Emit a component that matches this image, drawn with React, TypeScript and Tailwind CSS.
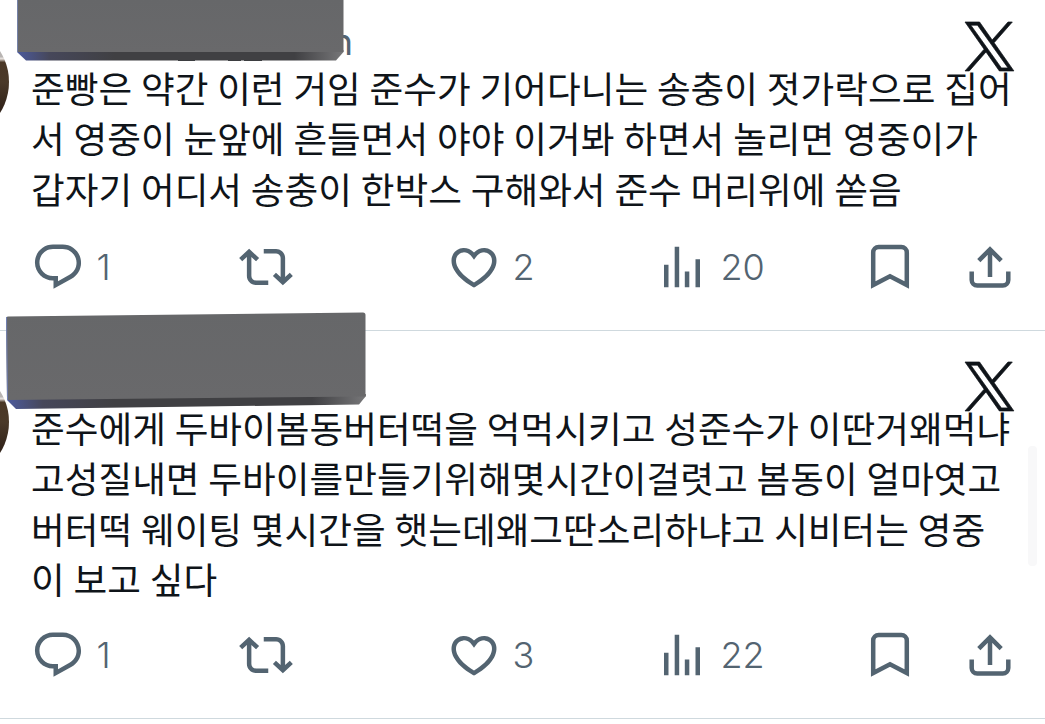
import type { ReactNode } from "react";

interface Post {
    id: number;
    lines: string[];
    replies: number;
    likes: number;
    views: number;
}

const posts: Post[] = [
    {
        id: 1,
        lines: [
            "준빵은 약간 이런 거임 준수가 기어다니는 송충이 젓가락으로 집어",
            "서 영중이 눈앞에 흔들면서 야야 이거봐 하면서 놀리면 영중이가",
            "갑자기 어디서 송충이 한박스 구해와서 준수 머리위에 쏟음",
        ],
        replies: 1,
        likes: 2,
        views: 20,
    },
    {
        id: 2,
        lines: [
            "준수에게 두바이봄동버터떡을 억먹시키고 성준수가 이딴거왜먹냐",
            "고성질내면 두바이를만들기위해몇시간이걸렷고 봄동이 얼마엿고",
            "버터떡 웨이팅 몇시간을 햇는데왜그딴소리하냐고 시비터는 영중",
            "이 보고 싶다",
        ],
        replies: 1,
        likes: 3,
        views: 22,
    },
];

function XLogo() {
    return (
        <svg viewBox="0 0 24 24" className="h-[49px] w-[49px] overflow-visible fill-[#0f1419] stroke-[#0f1419] stroke-[0.35]">
            <path d="M14.258 10.152L23.176 0h-2.113l-7.747 8.813L7.133 0H0l9.352 13.328L0 23.973h2.113l8.176-9.309 6.531 9.309h7.133zm-2.895 3.293l-.949-1.328L2.875 1.56h3.246l6.086 8.523.945 1.328 7.91 11.078h-3.246zm0 0" />
        </svg>
    );
}

function Icon({ children }: { children: ReactNode }) {
    return (
        <svg viewBox="0 0 24 24" className="h-[54px] w-[54px] shrink-0 fill-[#536471]">
            {children}
        </svg>
    );
}

function Count({ value }: { value: number }) {
    return <span className="pl-[11.5px] font-['Inter',sans-serif] text-[36px] leading-[54px] font-[350]">{value}</span>;
}

function Actions({ post }: { post: Post }) {
    return (
        <div className="flex h-[54px] text-[#536471]">
            <div className="flex w-[208px] shrink-0">
                <Icon>
                    <path d="M1.751 10c0-4.42 3.584-8 8.005-8h4.366c4.49 0 8.129 3.64 8.129 8.13 0 2.96-1.607 5.68-4.196 7.11l-8.054 4.46v-3.69h-.067c-4.49.1-8.183-3.51-8.183-8.01zm8.005-6c-3.317 0-6.005 2.69-6.005 6 0 3.37 2.77 6.08 6.138 6.01l.351-.01h1.761v2.3l5.087-2.81c1.951-1.08 3.163-3.13 3.163-5.36 0-3.39-2.744-6.13-6.129-6.13H9.756z" />
                </Icon>
                <Count value={post.replies} />
            </div>
            <div className="flex w-[208px] shrink-0">
                <Icon>
                    <path d="M4.5 3.88l4.432 4.14-1.364 1.46L5.5 7.55V16c0 1.1.896 2 2 2H13v2H7.5c-2.209 0-4-1.79-4-4V7.55L1.432 9.48.068 8.02 4.5 3.88zM16.5 6H11V4h5.5c2.209 0 4 1.79 4 4v8.45l2.068-1.93 1.364 1.46-4.432 4.14-4.432-4.14 1.364-1.46 2.068 1.93V8c0-1.1-.896-2-2-2z" />
                </Icon>
            </div>
            <div className="flex w-[208px] shrink-0">
                <Icon>
                    <path d="M16.697 5.5c-1.222-.06-2.679.51-3.89 2.16l-.805 1.09-.806-1.09C9.984 6.01 8.526 5.44 7.304 5.5c-1.243.07-2.349.78-2.91 1.91-.552 1.12-.633 2.78.479 4.82 1.074 1.97 3.257 4.27 7.129 6.61 3.87-2.34 6.052-4.64 7.126-6.61 1.111-2.04 1.03-3.7.477-4.82-.561-1.13-1.666-1.84-2.908-1.91zm4.187 7.69c-1.351 2.48-4.001 5.12-8.379 7.67l-.503.3-.504-.3c-4.379-2.55-7.029-5.19-8.382-7.67-1.36-2.5-1.41-4.86-.514-6.67.887-1.79 2.647-2.91 4.601-3.01 1.651-.09 3.368.56 4.798 2.01 1.429-1.45 3.146-2.1 4.796-2.01 1.954.1 3.714 1.22 4.601 3.01.896 1.81.846 4.17-.514 6.67z" />
                </Icon>
                <Count value={post.likes} />
            </div>
            <div className="flex w-[208px] shrink-0">
                <Icon>
                    <path d="M8.75 21V3h2v18h-2zM18 21V8.5h2V21h-2zM4 21l.004-10h2L6 21H4zm9.248 0v-7h2v7h-2z" />
                </Icon>
                <Count value={post.views} />
            </div>
            <div className="flex shrink-0 gap-[46px]">
                <svg viewBox="0 0 54 54" className="h-[54px] w-[54px] fill-none stroke-[#536471] stroke-[4.5]">
                    <path d="M10.2 45V12.5a5.5 5.5 0 0 1 5.5-5.5h22.6a5.5 5.5 0 0 1 5.5 5.5V45L27 36.3z" />
                </svg>
                <svg viewBox="0 0 54 54" className="h-[54px] w-[54px] fill-none stroke-[#536471] stroke-[4.5]">
                    <path d="M27 37V9.5M15.8 20.6L27 9.4l11.2 11.2M8.7 31.5v8.6a5.5 5.5 0 0 0 5.5 5.5h25.6a5.5 5.5 0 0 0 5.5-5.5v-8.6" />
                </svg>
            </div>
        </div>
    );
}

function Avatar({ className }: { className: string }) {
    return (
        <div className={`absolute h-[116px] w-[116px] rounded-full bg-[linear-gradient(to_bottom,#b8b4b2_0%,#b8b4b2_28%,#e9e4e0_30%,#4a3726_33%,#4b3a29_50%,#2f2118_75%)] ${className}`} />
    );
}

export default function App() {
    const [first, second] = posts;

    return (
        <main className="relative h-[724px] w-[1045px] overflow-hidden bg-white font-['Noto_Sans_CJK_KR',sans-serif] text-[#0f1419]">
            <article className="flex h-[331px] flex-col border-b border-[#cfd9de] pr-[31.5px] pl-[31px]">
                <header className="flex h-[62px] shrink-0 justify-between pt-[22px]">
                    <span className="w-[322px] text-right font-['Inter',sans-serif] text-[37px] leading-[40px] text-[#536471]">n</span>
                    <XLogo />
                </header>
                <div className="h-[177.5px] shrink-0 text-[36.65px] leading-[50.4px] whitespace-nowrap [word-spacing:0.6px]">
                    {first.lines.map((line) => (
                        <p key={line}>{line}</p>
                    ))}
                </div>
                <Actions post={first} />
            </article>

            <article className="flex h-[388px] flex-col border-b border-[#cfd9de] pr-[31.5px] pl-[31px]">
                <header className="flex h-[71px] shrink-0 justify-end pt-[31px]">
                    <XLogo />
                </header>
                <div className="h-[225.5px] shrink-0 text-[36.65px] leading-[50.4px] whitespace-nowrap [word-spacing:0.6px]">
                    {second.lines.map((line) => (
                        <p key={line}>{line}</p>
                    ))}
                </div>
                <Actions post={second} />
            </article>

            <Avatar className="top-[24px] left-[-107px]" />
            <Avatar className="top-[364px] left-[-107px]" />

            {/* Blocks covering the names */}
            <svg viewBox="0 0 380 420" className="absolute top-0 left-0 h-[420px] w-[380px]">
                <defs>
                    <linearGradient id="edge" x1="0" x2="1" y1="0" y2="0">
                        <stop offset="0" stopColor="#4c5a9c" />
                        <stop offset="0.1" stopColor="#46475a" />
                        <stop offset="0.3" stopColor="#404043" />
                        <stop offset="0.85" stopColor="#404043" />
                        <stop offset="1" stopColor="#777779" />
                    </linearGradient>
                    <linearGradient id="face" x1="0" x2="0" y1="0" y2="1">
                        <stop offset="0" stopColor="#666769" />
                        <stop offset="1" stopColor="#69696b" />
                    </linearGradient>
                </defs>
                <path d="M17 50L343.500 50V52L336 60.500H26L17 52z" fill="url(#edge)" />
                <path d="M178 60.500h17M228 60.500h13M244 60.500h18" stroke="#3b3d40" />
                <path d="M17 0H343.500V52H17z" fill="url(#face)" />
                <path d="M17.500 0V52" stroke="#7582a8" />
                <path d="M7 398L366 394V396L359 404.500L16 409L7 400z" fill="url(#edge)" />
                <path d="M6 318Q6 316.500 8 316.500L363 312.500Q365.500 312.500 365.500 315V396.500L7 400z" fill="url(#face)" />
                <path d="M6.500 317L7.500 400" stroke="#7180b4" />
            </svg>

            <div className="absolute top-[446px] left-[1028px] h-[120px] w-[9px] rounded-sm bg-[#f8f8f9]" />
        </main>
    );
}
